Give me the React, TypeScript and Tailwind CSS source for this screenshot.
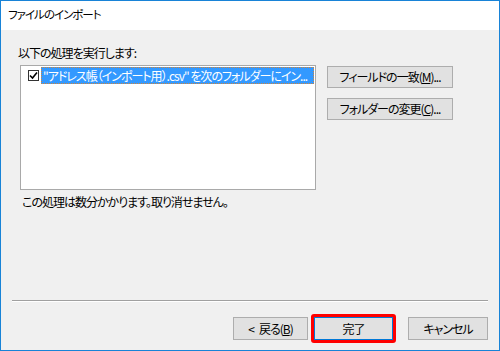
import React from "react";

const F = "font-['Noto_Sans_CJK_JP',sans-serif] [font-feature-settings:'palt'] tracking-[-1px]";

function Btn({ children, className = "" }: { children: React.ReactNode; className?: string }) {
  return (
    <div
      className={`flex items-center justify-center bg-[#e1e1e1] border border-[#adadad] text-[12px] leading-[16px] text-black ${className}`}
    >
      {children}
    </div>
  );
}

export default function App() {
  return (
    <div className={`w-[500px] h-[351px] border border-[#1883d7] flex flex-col ${F}`}>
      <div className="h-[29px] bg-white flex items-center pl-[7px] pb-[3px] text-[11.5px] leading-[16px] text-black">
        ファイルのインポート
      </div>
      <div className="flex-1 bg-[#f0f0f0] flex flex-col">
        <div className="mt-[15px] ml-[17px] text-[12px] leading-[16px] text-black">以下の処理を実行します:</div>
        <div className="mt-[4px] ml-[19px] flex">
          <div className="w-[296px] h-[125px] bg-white border border-[#a9a9a9] pt-[1px] pr-[1px]">
            <div className="flex items-center h-[17px]">
              <div className="ml-[7px] w-[11px] h-[11px] border border-[#333] bg-white flex items-center justify-center">
                <svg width="9" height="9" viewBox="0 0 9 9">
                  <path d="M1 4.5 L3.5 7 L8 1.5" fill="none" stroke="#000" strokeWidth="1.6" />
                </svg>
              </div>
              <div className="ml-[2px] flex-1 h-[17px] bg-[#3399ff] border border-dotted border-[#d0853c] text-white text-[12px] leading-[15px] pl-[1px] whitespace-nowrap overflow-hidden">
                "アドレス帳（インポート用）.csv" を次のフォルダーにイン...
              </div>
            </div>
          </div>
          <div className="ml-[11px] mt-[1px] flex flex-col gap-[10px]">
            <Btn className="w-[126px] h-[22px]">
              フィールドの一致(<span className="underline">M</span>)...
            </Btn>
            <Btn className="w-[126px] h-[22px]">
              フォルダーの変更(<span className="underline">C</span>)...
            </Btn>
          </div>
        </div>
        <div className="mt-[4px] ml-[21px] text-[12px] leading-[16px] text-black">
          この処理は数分かかります。取り消せません。
        </div>
        <div className="mt-auto ml-[11px] mr-[11px] border-t border-t-[#a0a0a0] border-b border-b-white" />
        <div className="mt-[12px] mb-[7px] mr-[11px] flex items-center justify-end">
          <Btn className="w-[75px] h-[23px]">
            &lt;<span className="w-[5px]" />戻る(<span className="underline">B</span>)
          </Btn>
          <div className="ml-[3px] w-[85px] h-[29px] border-[3px] border-[#ff0000] rounded-[3px] flex">
            <Btn className="w-full h-full !border-[#0078d7]">完了</Btn>
          </div>
          <Btn className="ml-[12px] w-[80px] h-[23px]">キャンセル</Btn>
        </div>
      </div>
    </div>
  );
}
